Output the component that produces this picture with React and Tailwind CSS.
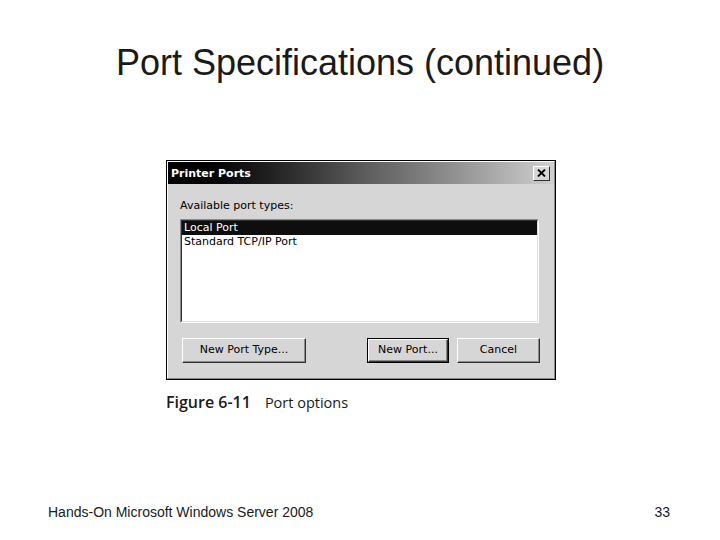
export default function App() {
  const btn =
    "h-[25px] flex items-center justify-center bg-[#d6d6d6] border border-t-white border-l-white border-r-[#303030] border-b-[#303030] shadow-[inset_-1px_-1px_0_#8a8a8a] text-[11px] text-black";
  return (
    <div className="w-[720px] h-[540px] bg-white flex flex-col font-['Liberation_Sans',Arial,sans-serif] text-[#1a1a1a]">
      <h1 className="pt-[41px] text-center text-[36px] leading-[43px] font-normal">
        Port Specifications (continued)
      </h1>

      <div className="mt-[76px] ml-[166px] w-[390px] h-[220px] border border-black bg-[#d6d6d6]">
        <div className="h-full border border-t-white border-l-white border-r-[#8a8a8a] border-b-[#8a8a8a] flex flex-col font-['DejaVu_Sans',Tahoma,sans-serif]">
          <div className="h-[22px] bg-linear-to-r from-black via-[#5a5a5a] to-[#d0d0d0] flex items-center justify-between pl-[3px] pr-[4px]">
            <span className="text-white font-bold text-[11px] leading-none">Printer Ports</span>
            <div className="w-[17px] h-[15px] bg-[#d6d6d6] border border-t-white border-l-white border-r-[#303030] border-b-[#303030] flex items-center justify-center">
              <svg width="9" height="8" viewBox="0 0 9 8">
                <path d="M1 0.5 L8 7.5 M8 0.5 L1 7.5" stroke="black" strokeWidth="1.8" />
              </svg>
            </div>
          </div>

          <div className="pl-[12px] mt-[15px] text-[11px] leading-[14px] text-black">Available port types:</div>

          <div className="ml-[12px] mt-[6px] w-[359px] h-[104px] bg-white border border-t-[#8a8a8a] border-l-[#8a8a8a] border-r-white border-b-white">
            <div className="h-full border border-t-[#303030] border-l-[#303030] border-r-[#e0e0e0] border-b-[#e0e0e0]">
              <div className="h-[14px] bg-[#0e0e0e] text-white text-[11px] leading-[14px] pl-[2px]">Local Port</div>
              <div className="h-[14px] text-black text-[11px] leading-[14px] pl-[2px]">Standard TCP/IP Port</div>
            </div>
          </div>

          <div className="mt-[15px] flex">
            <div className={`${btn} ml-[14px] w-[124px]`}>New Port Type...</div>
            <div className="ml-[61px] w-[82px] h-[25px] border border-black">
              <div className="w-full h-full flex items-center justify-center bg-[#d6d6d6] border border-t-white border-l-white border-r-[#303030] border-b-[#303030] shadow-[inset_-1px_-1px_0_#8a8a8a] text-[11px] text-black">
                New Port...
              </div>
            </div>
            <div className={`${btn} ml-[8px] w-[83px]`}>Cancel</div>
          </div>
        </div>
      </div>

      <div className="ml-[166px] mt-[12px] leading-[20px] font-['Open_Sans',sans-serif] text-[#1a1a1a] flex items-baseline">
        <span className="font-semibold text-[16px]">Figure 6-11</span>
        <span className="ml-[14px] text-[14.5px]">Port options</span>
      </div>

      <div className="mt-auto pb-[20px] flex justify-between pl-[48px] pr-[50px] text-[14px] leading-[16px] text-[#1a1a1a]">
        <span>Hands-On Microsoft Windows Server 2008</span>
        <span>33</span>
      </div>
    </div>
  );
}
